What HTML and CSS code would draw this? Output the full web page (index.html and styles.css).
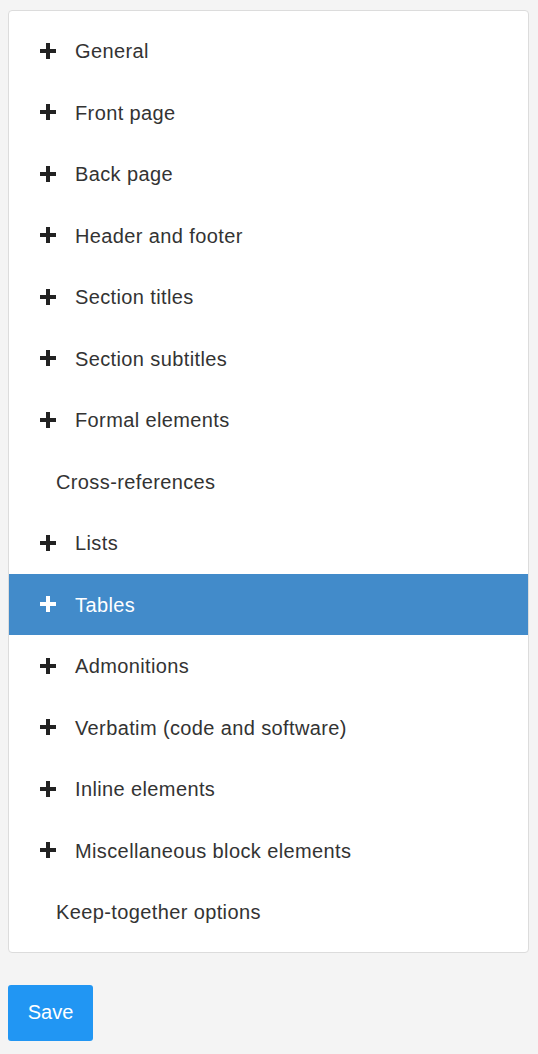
FILE: index.html
```html
<!DOCTYPE html>
<html>
<head>
<meta charset="utf-8">
<link rel="stylesheet" href="styles.css">
</head>
<body>
<div class="panel">
  <ul class="menu">
    <li class="item"><span class="plus"></span><span class="label">General</span></li>
    <li class="item"><span class="plus"></span><span class="label">Front page</span></li>
    <li class="item"><span class="plus"></span><span class="label">Back page</span></li>
    <li class="item"><span class="plus"></span><span class="label">Header and footer</span></li>
    <li class="item"><span class="plus"></span><span class="label">Section titles</span></li>
    <li class="item"><span class="plus"></span><span class="label">Section subtitles</span></li>
    <li class="item"><span class="plus"></span><span class="label">Formal elements</span></li>
    <li class="item leaf"><span class="label">Cross-references</span></li>
    <li class="item"><span class="plus"></span><span class="label">Lists</span></li>
    <li class="item active"><span class="plus"></span><span class="label">Tables</span></li>
    <li class="item"><span class="plus"></span><span class="label">Admonitions</span></li>
    <li class="item"><span class="plus"></span><span class="label">Verbatim (code and software)</span></li>
    <li class="item"><span class="plus"></span><span class="label">Inline elements</span></li>
    <li class="item"><span class="plus"></span><span class="label">Miscellaneous block elements</span></li>
    <li class="item leaf"><span class="label">Keep-together options</span></li>
  </ul>
</div>
<button class="save">Save</button>
</body>
</html>
```
FILE: styles.css
```css
html, body {
  margin: 0;
  padding: 0;
  background: #f4f4f4;
}
body {
  padding: 10px 9px 0 8px;
  font-family: "Liberation Sans", Arial, sans-serif;
  color: #333;
}
.panel {
  background: #fff;
  border: 1px solid #dcdcdc;
  border-radius: 4px;
  padding: 9px 0;
}
.menu {
  list-style: none;
  margin: 0;
  padding: 0;
}
.item {
  height: 61.5px;
  display: flex;
  align-items: center;
  padding-left: 31px;
  font-size: 20px;
  letter-spacing: 0.38px;
}
.label {
  padding-top: 2px;
}
.item.leaf {
  padding-left: 47px;
}
.plus {
  position: relative;
  width: 16px;
  height: 16px;
  margin-right: 19px;
  flex: none;
}
.plus::before, .plus::after {
  content: "";
  position: absolute;
  background: #222;
}
.plus::before {
  left: 0;
  top: 6px;
  width: 16px;
  height: 4px;
}
.plus::after {
  left: 6px;
  top: 0;
  width: 4px;
  height: 16px;
}
.item.active {
  background: #428bca;
  color: #fff;
}
.item.active .plus::before, .item.active .plus::after {
  background: #fff;
}
.save {
  margin-top: 32px;
  width: 85px;
  height: 56px;
  border: none;
  border-radius: 3px;
  background: #2196f3;
  color: #fff;
  font-family: "Liberation Sans", Arial, sans-serif;
  font-size: 20px;
  padding: 0;
}
```
